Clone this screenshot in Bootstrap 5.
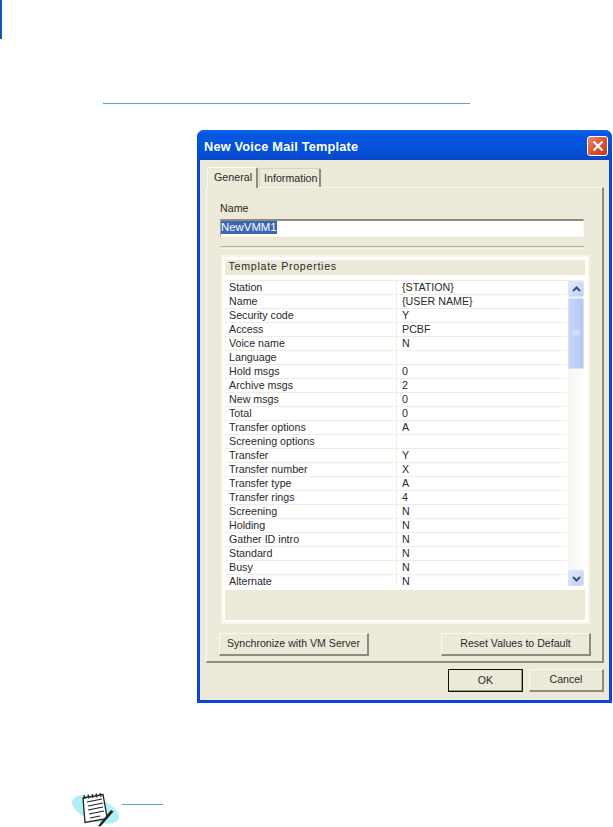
<!DOCTYPE html>
<html lang="en">
<head>
<meta charset="utf-8">
<title>New Voice Mail Template</title>
<link href="https://cdn.jsdelivr.net/npm/bootstrap@5.3.0/dist/css/bootstrap.min.css" rel="stylesheet">
<style>
html,body{background:#fff;margin:0;height:827px;overflow:hidden}
body{font-family:"Liberation Sans",Arial,sans-serif;font-size:10.7px;color:#2a2a2a;line-height:14px}
.edgebar{width:2px;height:39px;background:#0a5cb4}
.rule-top{width:367px;height:1px;background:#55a5d5;margin:64px 0 0 103px}
.xpwin{width:415px;height:573px;margin:26px 0 0 197px;background:#ece9d8;border:3px solid #0a46d8;border-top:0;border-radius:7px 7px 0 0;display:flex;flex-direction:column}
.xptitle{height:30px;margin:0 -3px;background:linear-gradient(#0a6af0 0,#0558e0 12%,#0350d8 70%,#0a46c8 100%);border-radius:7px 7px 0 0;padding:2px 4px 0 7px;flex:none}
.xptitle b{font-size:12.75px;color:#fff;letter-spacing:.2px;padding-top:2px}
.xpclose{width:21px;height:20px;border:1px solid #fff;border-radius:3px;background:linear-gradient(135deg,#e88a6c,#d9512c 55%,#c23c18)}
.xpbody{padding:0 5px 0 6px;flex:1;display:flex;flex-direction:column}
.xptabs{height:27px;padding:7px 0 0 1px;gap:1px;flex:none}
.xptab{border:1px solid #d8d4c0;border-bottom:0;border-right:2px solid #8e8b7a;border-radius:2px 2px 0 0;padding:2px 0 0 4px;height:19px;width:62px;margin-top:1px;background:#ece9d8;white-space:nowrap}
.xptab.on{height:21px;width:51px;margin-top:0;padding:2px 0 0 6px;border-left-color:#fffbf0;border-top-color:#fffbf0;position:relative;z-index:1}
.xppane{height:476px;border:1px solid #fbf9ee;border-right:2px solid #8e8b7a;border-bottom:2px solid #8e8b7a;padding:13px 0 0 13px;flex:none}
.xpname{height:18px;margin-top:4px;width:364px;background:#fff;border:1px solid #fbf9ee;border-top:2px solid #8e8b7a;border-left:1px solid #a5a290;line-height:13px;font-size:11.4px}
.xpname span{background:#3a66b4;color:#fff;display:inline-block}
.xpsep{width:364px;height:3px;margin:9px 0 6px;border-top:1px solid #b5b29f;border-bottom:1px solid #fbf9ee}
.xpgroup{width:369px;height:369px;margin-left:1px;background:#fff;border:2px solid #f7f5ea;padding:3px 3px 2px 2px;display:flex;flex-direction:column}
.xphead{height:15px;background:#ece9d8;padding-left:3.5px;line-height:12px;flex:none;letter-spacing:.7px}
.xpgrid{margin-top:5px;height:309px;display:flex;border-top:1px solid #efece0;flex:none;overflow:hidden}
.xprows{flex:1;overflow:hidden}
.xprow{height:14px;display:flex;border-bottom:1px solid #efece0;line-height:12px}
.xprow div:first-child{width:172px;padding-left:4px;border-right:1px solid #efece0;flex:none}
.xprow div:last-child{padding-left:5px}
.xprow:last-child{border:0;height:10px;overflow:hidden}
.xpscroll{width:16px;margin:0 1px 0 1px;height:305px;background:linear-gradient(90deg,#f4f4f0,#fdfdfb);display:flex;flex-direction:column;justify-content:space-between;position:relative}
.xparrow{height:16px;background:linear-gradient(135deg,#e3eafe,#bccdf6);border:1px solid #d8e2fb;border-radius:2px;display:flex;align-items:center;justify-content:center}
.xpthumb{position:absolute;left:0;right:0;top:17px;height:71px;background:linear-gradient(90deg,#c6d5fb,#b4c8f6);border:1px solid #d4dff9;border-radius:2px;display:flex;align-items:center;justify-content:center}
.xpfoot{height:30px;margin-top:1px;background:#ece9d8;flex:none}
.xpbtn{font-size:10.6px;line-height:14px;color:#2a2a2a;background:#ece9d8;border:1px solid #fbf9ee;border-right:2px solid #8e8b7a;border-bottom:2px solid #8e8b7a;height:23px;padding:0 0 2px;border-radius:0}
.xpbtnrow{width:372px;margin:9px 0 0 -1px}
.b-sync{width:150px}.b-reset{width:150px}
.xpactions{padding-top:6px;gap:6px;justify-content:flex-end}
.b-ok{width:75px;height:23px;border:1px solid #111;box-shadow:inset -1px -1px 0 #8e9b80}
.b-cancel{width:75px;height:23px}
.notefoot{margin:87px 0 0 70px;height:37px}
.rule-note{width:41px;height:1px;background:#55a5d5;margin:14px 0 0 2px}
</style>
</head>
<body>
<div class="edgebar"></div>
<div class="rule-top"></div>
<div class="xpwin">
  <div class="xptitle d-flex align-items-center justify-content-between"><b>New Voice Mail Template</b>
    <span class="xpclose d-flex align-items-center justify-content-center"><svg width="12" height="12" viewBox="0 0 12 12"><path d="M1.500 1.500l9 9M10.500 1.500l-9 9" stroke="#fff" stroke-width="2.200"/></svg></span></div>
  <div class="xpbody">
    <div class="xptabs d-flex"><div class="xptab on">General</div><div class="xptab">Information</div></div>
    <div class="xppane">
      <div>Name</div>
      <div class="xpname"><span>NewVMM1</span></div>
      <div class="xpsep"></div>
      <div class="xpgroup">
        <div class="xphead">Template Properties</div>
        <div class="xpgrid">
          <div class="xprows">
            <div class="xprow"><div>Station</div><div>{STATION}</div></div>
            <div class="xprow"><div>Name</div><div>{USER NAME}</div></div>
            <div class="xprow"><div>Security code</div><div>Y</div></div>
            <div class="xprow"><div>Access</div><div>PCBF</div></div>
            <div class="xprow"><div>Voice name</div><div>N</div></div>
            <div class="xprow"><div>Language</div><div></div></div>
            <div class="xprow"><div>Hold msgs</div><div>0</div></div>
            <div class="xprow"><div>Archive msgs</div><div>2</div></div>
            <div class="xprow"><div>New msgs</div><div>0</div></div>
            <div class="xprow"><div>Total</div><div>0</div></div>
            <div class="xprow"><div>Transfer options</div><div>A</div></div>
            <div class="xprow"><div>Screening options</div><div></div></div>
            <div class="xprow"><div>Transfer</div><div>Y</div></div>
            <div class="xprow"><div>Transfer number</div><div>X</div></div>
            <div class="xprow"><div>Transfer type</div><div>A</div></div>
            <div class="xprow"><div>Transfer rings</div><div>4</div></div>
            <div class="xprow"><div>Screening</div><div>N</div></div>
            <div class="xprow"><div>Holding</div><div>N</div></div>
            <div class="xprow"><div>Gather ID intro</div><div>N</div></div>
            <div class="xprow"><div>Standard</div><div>N</div></div>
            <div class="xprow"><div>Busy</div><div>N</div></div>
            <div class="xprow"><div>Alternate</div><div>N</div></div>
          </div>
          <div class="xpscroll">
            <div class="xparrow"><svg width="9" height="7" viewBox="0 0 9 7"><path d="M1 5l3.500-3.500L8 5" fill="none" stroke="#3a4f7a" stroke-width="2"/></svg></div>
            <div class="xpthumb"><svg width="7" height="7" viewBox="0 0 7 7"><path d="M0 1h7M0 3h7M0 5h7" stroke="#e6ecfd"/></svg></div>
            <div class="xparrow"><svg width="9" height="7" viewBox="0 0 9 7"><path d="M1 2l3.500 3.500L8 2" fill="none" stroke="#3a4f7a" stroke-width="2"/></svg></div>
          </div>
        </div>
        <div class="xpfoot"></div>
      </div>
      <div class="xpbtnrow d-flex justify-content-between">
        <button type="button" class="btn xpbtn b-sync">Synchronize with VM Server</button>
        <button type="button" class="btn xpbtn b-reset">Reset Values to Default</button>
      </div>
    </div>
    <div class="xpactions d-flex">
      <button type="button" class="btn xpbtn b-ok">OK</button>
      <button type="button" class="btn xpbtn b-cancel">Cancel</button>
    </div>
  </div>
</div>
<div class="notefoot d-flex">
  <svg width="50" height="37" viewBox="0 0 50 37" role="img" aria-label="Note">
    <ellipse cx="25.500" cy="19.500" rx="25" ry="11.500" transform="rotate(22 25.500 19.500)" fill="#aef0f6"/>
    <path d="M13 8L33 4.500 37 27 35 29 15 32.500z" fill="#fff" stroke="#222" stroke-width="1.300"/>
    <path d="M17 12l15-3M18 16l15-3M18 20l15-3M19 24l15-3M20 28l10-2" stroke="#222" stroke-width="1.200"/>
    <path d="M14 5l1 4M18 4.500l1 4M22 4l1 4M26 3.500l1 4M30 3l1 4" stroke="#222" stroke-width="1.200"/>
    <path d="M28 36l13-16 2.500 1.500L30.500 36.500z" fill="#222"/>
  </svg>
  <div class="rule-note"></div>
</div>
</body>
</html>
